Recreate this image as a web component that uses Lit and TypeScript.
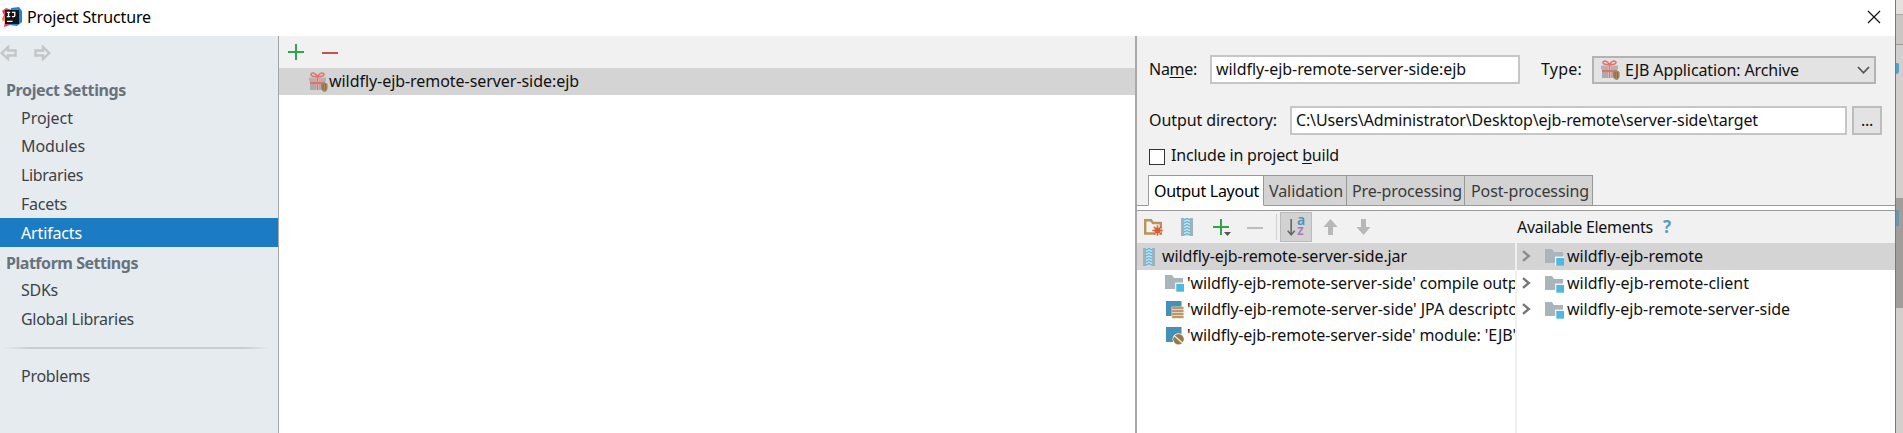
import { LitElement, html, css, svg } from "lit";
import { customElement, property, query } from "lit/decorators.js";

/** A single line of text, tracked so that it takes exactly `w` pixels. */
@customElement("fit-label")
class FitLabel extends LitElement {
  @property({ type: Number }) w = 0;
  @query(".t") t!: HTMLElement;
  static styles = css`
    :host { display: block; white-space: pre; line-height: 20px; flex: none; }
    .t { display: inline-block; }
  `;
  firstUpdated() {
    const natural = this.t.getBoundingClientRect().width;
    const n = (this.textContent || "").length;
    if (this.w && n) this.t.style.letterSpacing = `${(this.w - natural) / n}px`;
  }
  render() {
    return html`<span class="t"><slot></slot></span>`;
  }
}

const icon = (w: number, h: number, body: unknown) =>
  html`<svg width=${w} height=${h} viewBox="0 0 ${w} ${h}">${body}</svg>`;

const appIcon = icon(20, 20, svg`
  <path d="M0 4L4 1L10 3L8 18L2 20L3 14L0 12L2 8Z" fill="#ef3e5c"/>
  <path d="M0 12L3 9L4 15L1 14Z" fill="#f7913d"/>
  <path d="M9 1L17 0L20 4V15L15 19L8 18Z" fill="#1487e0"/>
  <rect x="3" y="3" width="14" height="14" fill="#151515"/>
  <path d="M4.8 5.3H8.2M6.5 5.3V9.6M4.8 9.6H8.2M10 5.3H12.8V8.4Q12.8 9.7 11.4 9.6H10M5 14.3H10.5" stroke="#fff" stroke-width="1.3" fill="none"/>`);

const back = icon(17, 16, svg`<path d="M1.7 8L8 2V5.5H15.5V10.5H8V14Z" fill="none" stroke="#c3c6c8" stroke-width="2.4"/>`);
const forward = icon(17, 16, svg`<path d="M15.3 8L9 2V5.5H1.5V10.5H9V14Z" fill="none" stroke="#c3c6c8" stroke-width="2.4"/>`);
const plus = icon(16, 16, svg`<path d="M8 0V16M0 8H16" stroke="#2fa44f" stroke-width="2"/>`);
const minus = (c: string) => icon(16, 16, svg`<path d="M0 9H16" stroke=${c} stroke-width="2"/>`);
const gift = icon(19, 20, svg`
  <path d="M1 8H7V18H1ZM10 8H16V18H10Z" fill="#ababab"/>
  <path d="M0 5.5H7V9.5H0ZM10 5.5H17V9.5H10Z" fill="#b8b1b0"/>
  <path d="M8.5 5V18M1 11H16" stroke="#e2736b" stroke-width="1.8"/>
  <path d="M8.5 4.5C6 .2 2 .3 2 2.6C2 4.4 5 4.7 8.5 4.7C12 4.7 15 4.4 15 2.6C15 .3 11 .2 8.5 4.5Z" fill="none" stroke="#e2736b" stroke-width="1.6"/>
  <path d="M12 12Q15 8.5 18.6 12V16Q18 20 15.5 20Q12.5 19 12 16Z" fill="#a58661"/>
  <path d="M14 12V18M16.5 12V18" stroke="#80633f" stroke-width=".8"/>`);
const jar = icon(12, 18, svg`
  <rect width="12" height="18" fill="#9db2bd"/>
  <path d="M3 0H9V18H3Z" fill="#bfe2ee"/>
  <path d="M3 2L6 .5L9 2M3 5L6 3.5L9 5M3 8L6 6.5L9 8M3 11L6 9.5L9 11M3 14L6 12.5L9 14M3 17L6 15.5L9 17" fill="none" stroke="#5aaed0" stroke-width="1.1"/>`);
const newFolder = icon(19, 17, svg`
  <path d="M1.2 1.2H7L9 4H16.8V14.5H1.2Z" fill="none" stroke="#b9935a" stroke-width="2.4"/>
  <circle cx="13.5" cy="11.5" r="4.2" fill="#f1f1f1"/>
  <path d="M13.5 6.3V16.7M8.3 11.5H18.7M9.8 7.8L17.2 15.2M17.2 7.8L9.8 15.2" stroke="#dc5a35" stroke-width="1.4"/>
  <circle cx="13.5" cy="11.5" r="3" fill="#dc5a35"/>`);
const addMenu = icon(20, 20, svg`<path d="M8 2V18M0 10H16" stroke="#2fa44f" stroke-width="2"/><path d="M11 15H18L14.5 19Z" fill="#555"/>`);
const sortArrow = icon(9, 18, svg`<path d="M4.2 1V17M.7 12.8L4.2 16.8L7.7 12.8" fill="none" stroke="#666" stroke-width="1.6"/>`);
const up = icon(15, 16, svg`<path d="M7.5 0L14.5 8H10V16H5V8H.5Z" fill="#b7b7b7"/>`);
const down = icon(15, 16, svg`<path d="M7.5 16L14.5 8H10V0H5V8H.5Z" fill="#b7b7b7"/>`);
const chevron = icon(9, 12, svg`<path d="M1 1.2L6.8 6L1 10.8" fill="none" stroke="#757575" stroke-width="2.4"/>`);
const folder = icon(19, 17, svg`
  <path d="M0 0H7L9 3H18V14H0Z" fill="#a9b4bb"/>
  <rect x="10" y="7.5" width="9" height="9" fill="#fff" opacity=".8"/>
  <rect x="11.3" y="9" width="7.7" height="7.7" fill="#4fb8e0"/>`);
const jpa = icon(19, 18, svg`
  <rect x="1" width="15.5" height="15" fill="#4590b5"/>
  <rect x="6.5" y="5.5" width="12" height="12" fill="#e9d3b4"/>
  <path d="M7.2 7H18.5M7.2 10H18.5M7.2 13H18.5M7.2 16H18.5" stroke="#a9855a" stroke-width="1.3"/>`);
const ejb = icon(19, 18, svg`
  <rect x="1" width="15.5" height="15" fill="#4590b5"/>
  <circle cx="13.5" cy="12.3" r="6" fill="#fff"/>
  <circle cx="13.5" cy="12.3" r="5.3" fill="#98794c"/>
  <path d="M9 8.5L18 16.5" stroke="#f5eee0" stroke-width="1.4"/>`);

@customElement("app-root")
class AppRoot extends LitElement {
  static styles = css`
    * { box-sizing: border-box; }
    :host { display: flex; width: 1903px; height: 433px; overflow: hidden; background: #fff;
      font: 16px/20px "Noto Sans", "Open Sans", sans-serif; color: #111; }
    svg { display: block; flex: none; }
    .window { width: 1896px; border-right: 1px solid #2f8fc4; display: flex; flex-direction: column; flex: none; }
    .title { height: 36px; display: flex; align-items: flex-start; padding: 7px 14px 0 2px; flex: none; }
    .title .name { margin: 0 auto 0 5px; color: #000; }
    .close { margin-top: 3px; }
    .body { display: flex; flex: 1; min-height: 0; }

    .side { width: 279px; border-right: 1px solid #a2a4a6; background: #e6ebef; color: #3c4248; flex: none; }
    .nav { display: flex; gap: 17px; padding: 9px 0 0 0; height: 39px; }
    .head { height: 28px; padding: 5px 0 0 6px; font-weight: bold; color: #66727d; }
    .head.second { padding-top: 6px; }
    .item { height: 29px; padding: 5px 0 0 21px; }
    .item.short { height: 28px; }
    .item.sel { background: #1b7cc4; color: #fff; }
    .rule { height: 2px; margin: 14px 8px 12px 3px;
      background: linear-gradient(90deg, transparent, #c9cdd1 10%, #c9cdd1 90%, transparent); }

    .list { width: 856px; flex: none; }
    .bar { height: 32px; background: #f1f1f1; display: flex; gap: 18px; padding: 8px 9px; }
    .artifact { height: 27px; background: #d4d4d4; display: flex; padding: 4px 0 0 30px; gap: 1px; }
    .artifact fit-label { margin-top: -1px; }

    .detail { flex: 1; border-left: 2px solid #a8a8a8; background: #f1f1f1; display: flex; flex-direction: column; min-width: 0; }
    .line { display: flex; flex: none; padding-left: 12px; }
    .l1 { height: 70px; padding-top: 19px; }
    .l2 { height: 41px; }
    .l3 { height: 28px; padding-top: 2px; }
    .l1 > fit-label { margin-top: 4px; }
    .l2 > fit-label { margin-top: 4px; }
    u { text-underline-offset: 2px; text-decoration-thickness: 1px; }
    .field { background: #fff; border: 2px solid #c6c6c6; height: 29px; padding: 2px 0 0 4px; }
    .field.name { width: 310px; margin-left: 13px; margin-right: 21px; }
    .field.dir { width: 557px; margin-left: 13px; margin-right: 5px; }
    .combo { display: flex; width: 284px; height: 28px; margin: 1px 0 0 10px; border: 2px solid #b3b3b3; background: #e3e3e3; padding: 2px 5px 0 7px; }
    .combo fit-label { margin: 0 auto 0 5px; }
    .combo .arrow { margin: 6px -1px 0 0; }
    .browse { width: 30px; height: 29px; border: 2px solid #bdbdbd; background: #e3e3e3; display: flex; justify-content: center; padding-top: 2px; }
    .check { width: 16px; height: 16px; border: 1.5px solid #333; background: #fff; margin-right: 6px; }
    .l3 fit-label { margin-top: -4px; }

    .tabs { display: flex; height: 31px; flex: none; }
    .tabs .pad { border-bottom: 1px solid #999; }
    .tabs .pad.start { width: 11px; }
    .tabs .pad.end { flex: 1; }
    .tab { border: 1px solid #999; border-left-width: 0; background: #d3d3d3; color: #3a3a3a; padding: 5px 0 0 5px; }
    .tab.on { background: #fff; color: #000; border-left-width: 1px; border-bottom-color: #fff; width: 116px; padding-left: 5px; }
    .tab.b { width: 83px; } .tab.c { width: 118px; } .tab.d { width: 128px; padding-left: 6px; }
    .gap { height: 4px; background: #fff; flex: none; }
    .tools { height: 33px; border-top: 1px solid #999; display: flex; flex: none; }
    .left-tools { width: 380px; display: flex; align-items: center; padding: 0 0 0 7px; }
    .sep { width: 1px; height: 26px; background: #cfcfcf; margin: 0 3px 0 13px; }
    .toggle { width: 32px; height: 30px; background: #d2d2d2; border: 1px solid #bbb; display: flex; align-items: center; justify-content: center; }
    .az { font: 600 14px/10px "Noto Sans", sans-serif; display: flex; flex-direction: column; width: 8px; margin: -4px 0 0 1px; }
    .a-letter { color: #4a94bf; } .z-letter { color: #a67bb8; }
    .help { font-weight: bold; color: #5b9dba; font-size: 17px; margin-left: 10px; }
    .avail { display: flex; padding-top: 6px; }
    .trees { display: flex; flex: 1; background: #fff; min-height: 0; }
    .tree { overflow: hidden; }
    .tree.a { width: 378px; flex: none; }
    .tree.z { flex: 1; border-left: 2px solid #f0f0f0; }
    .row { display: flex; height: 26px; padding-top: 3px; }
    .row.sel { height: 27px; background: #d4d4d4; }
    .a .row { padding-left: 28px; }
    .a .row.sel { padding-left: 6px; }
    .a .row svg { margin: 2px 3px 0 0; }
    .a .row.sel svg { margin-right: 7px; }
    .z .row { padding-left: 5px; }
    .z .row .chev { margin: 4px 14px 0 0; }
    .z .row .fold { margin: 3px 3px 0 0; }
    .z .row.sel .chev { opacity: .75; }

    .behind { flex: 1; background: #d3cfce; display: flex; flex-direction: column; align-items: flex-start; }
    .behind .s1 { height: 15px; width: 7px; background: #e4e2e1; border-bottom: 1px solid #aaa; }
    .behind .s2 { height: 30px; width: 7px; background: #cac6c5; border-bottom: 1px solid #999; }
    .behind .s3 { width: 3px; height: 11px; margin-top: 18px; background: #55a0c4; border-radius: 0 2px 4px 0; }
    .behind .s4 { width: 7px; height: 110px; margin-top: 124px; background: #a19d9c; padding-top: 12px; }
    .behind .s5 { width: 3px; height: 16px; background: #6796ae; }
  `;

  render() {
    const nav = (t: string, w: number, c = "") => html`<div class="item ${c}"><fit-label w=${w}>${t}</fit-label></div>`;
    const leaf = (i: unknown, t: string, w: number) => html`<div class="row">${i}<fit-label w=${w}>${t}</fit-label></div>`;
    const mod = (t: string, w: number, c = "") => html`<div class="row ${c}"><div class="chev">${chevron}</div><div class="fold">${folder}</div><fit-label w=${w}>${t}</fit-label></div>`;
    return html`
      <div class="window">
        <div class="title">${appIcon}<fit-label class="name" w="124">Project Structure</fit-label>
          <div class="close">${icon(14, 14, svg`<path d="M1 1L13 13M13 1L1 13" stroke="#111" stroke-width="1.2"/>`)}</div></div>
        <div class="body">
          <div class="side">
            <div class="nav">${back}${forward}</div>
            <div class="head"><fit-label w="120">Project Settings</fit-label></div>
            ${nav("Project", 52, "short")}${nav("Modules", 64)}${nav("Libraries", 62)}${nav("Facets", 46)}${nav("Artifacts", 61, "sel")}
            <div class="head second"><fit-label w="132">Platform Settings</fit-label></div>
            ${nav("SDKs", 37)}${nav("Global Libraries", 113)}
            <div class="rule"></div>
            ${nav("Problems", 69)}
          </div>
          <div class="list">
            <div class="bar">${plus}${minus("#c9504c")}</div>
            <div class="artifact">${gift}<fit-label w="250">wildfly-ejb-remote-server-side:ejb</fit-label></div>
          </div>
          <div class="detail">
            <div class="line l1">
              <fit-label w="48">Na<u>m</u>e:</fit-label>
              <div class="field name"><fit-label w="250">wildfly-ejb-remote-server-side:ejb</fit-label></div>
              <fit-label w="41">Type:</fit-label>
              <div class="combo">${gift}<fit-label w="174">EJB Application: Archive</fit-label>
                <div class="arrow">${icon(13, 9, svg`<path d="M1 1L6.5 6.8L12 1" fill="none" stroke="#555" stroke-width="1.8"/>`)}</div></div>
            </div>
            <div class="line l2">
              <fit-label w="128">Output directory:</fit-label>
              <div class="field dir"><fit-label w="462">C:\\Users\\Administrator\\Desktop\\ejb-remote\\server-side\\target</fit-label></div>
              <div class="browse"><fit-label w="12">...</fit-label></div>
            </div>
            <div class="line l3"><div class="check"></div><fit-label w="168">Include in project <u>b</u>uild</fit-label></div>
            <div class="tabs">
              <div class="pad start"></div>
              <div class="tab on"><fit-label w="105">Output Layout</fit-label></div>
              <div class="tab b"><fit-label w="74">Validation</fit-label></div>
              <div class="tab c"><fit-label w="110">Pre-processing</fit-label></div>
              <div class="tab d"><fit-label w="118">Post-processing</fit-label></div>
              <div class="pad end"></div>
            </div>
            <div class="gap"></div>
            <div class="tools">
              <div class="left-tools">
                ${newFolder}<svg width="18" height="1"></svg>${jar}<svg width="20" height="1"></svg>${addMenu}<svg width="14" height="1"></svg>${minus("#bdbdbd")}
                <div class="sep"></div><div class="toggle">${sortArrow}<div class="az"><span class="a-letter">a</span><span class="z-letter">z</span></div></div>
                <svg width="11" height="1"></svg>${up}<svg width="18" height="1"></svg>${down}
              </div>
              <div class="avail"><fit-label w="136">Available Elements</fit-label><span class="help">?</span></div>
            </div>
            <div class="trees">
              <div class="tree a">
                <div class="row sel">${jar}<fit-label w="245">wildfly-ejb-remote-server-side.jar</fit-label></div>
                ${leaf(folder, "'wildfly-ejb-remote-server-side' compile output", 346)}
                ${leaf(jpa, "'wildfly-ejb-remote-server-side' JPA descriptors", 345)}
                ${leaf(ejb, "'wildfly-ejb-remote-server-side' module: 'EJB'", 329)}
              </div>
              <div class="tree z">
                ${mod("wildfly-ejb-remote", 136, "sel")}${mod("wildfly-ejb-remote-client", 182)}${mod("wildfly-ejb-remote-server-side", 223)}
              </div>
            </div>
          </div>
        </div>
      </div>
      <div class="behind"><div class="s1"></div><div class="s2"></div><div class="s3"></div><div class="s4"><div class="s5"></div></div></div>`;
  }
}
